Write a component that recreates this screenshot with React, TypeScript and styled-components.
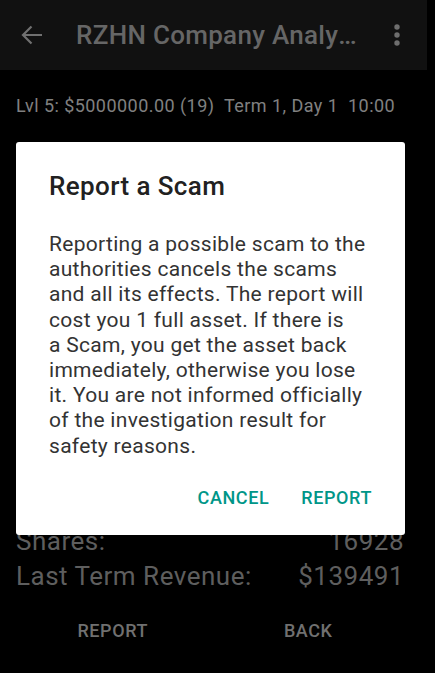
import React from 'react';
import styled, { createGlobalStyle } from 'styled-components';

const GlobalStyle = createGlobalStyle`
    html, body {
        margin: 0;
        padding: 0;
        background: #000;
    }
    body {
        font-family: Roboto, 'Noto Sans', sans-serif;
        -webkit-font-smoothing: antialiased;
    }
`;

const Screen = styled.div`
    position: relative;
    width: 435px;
    height: 673px;
    background: #000;
    overflow: hidden;
`;

const AppBar = styled.header`
    display: flex;
    align-items: center;
    width: 427px;
    height: 70px;
    background: #111111;
`;

const IconButton = styled.div<{ $shift?: number }>`
    display: flex;
    align-items: center;
    justify-content: center;
    width: 64px;
    height: 70px;
    flex-shrink: 0;
    padding-left: ${({ $shift }) => $shift ?? 0}px;
    box-sizing: border-box;
`;

const BarTitle = styled.h1`
    flex: 1;
    margin: 0 0 0 12px;
    min-width: 0;
    font-size: 26px;
    font-weight: 500;
    letter-spacing: 0.3px;
    color: #666666;
    white-space: nowrap;
    overflow: hidden;
    text-overflow: ellipsis;
`;

const StatusLine = styled.div`
    padding: 24px 16px 0;
    height: 24px;
    line-height: 24px;
    font-size: 18px;
    letter-spacing: 0.45px;
    color: #808080;
    white-space: pre;
`;

const Details = styled.div`
    display: flex;
    flex-direction: column;
    margin-top: 406px;
    padding: 0 31px 0 16px;
`;

const DetailRow = styled.div`
    display: flex;
    justify-content: space-between;
    height: 35px;
    line-height: 35px;
    font-size: 26px;
    letter-spacing: 0.5px;
    color: #5e5e5e;
`;

const Actions = styled.div`
    display: grid;
    grid-template-columns: 1fr 1fr;
    margin-top: 26px;
    padding: 0 29px 0 15px;
`;

const ActionButton = styled.div`
    text-align: center;
    font-size: 18px;
    font-weight: 500;
    letter-spacing: 0.6px;
    color: #707070;
`;

const Scrim = styled.div`
    position: absolute;
    inset: 0;
    display: flex;
    align-items: flex-start;
    padding: 142px 0 0 16px;
`;

const Dialog = styled.div`
    display: flex;
    flex-direction: column;
    box-sizing: border-box;
    width: 389px;
    height: 393px;
    padding: 28px 25px 20px 33px;
    background: #ffffff;
    border-radius: 3px;
`;

const DialogTitle = styled.h2`
    margin: 0;
    height: 32px;
    line-height: 32px;
    font-size: 26px;
    font-weight: 500;
    letter-spacing: 0.4px;
    color: #212121;
`;

const DialogBody = styled.p`
    margin: 30px 0 0;
    padding-right: 4px;
    font-size: 21px;
    line-height: 25.2px;
    letter-spacing: 0.3px;
    color: #333333;
`;

const DialogActions = styled.div`
    display: flex;
    justify-content: flex-end;
    gap: 16px;
    margin-top: auto;
`;

const TextButton = styled.button`
    height: 36px;
    padding: 0 8px;
    border: none;
    background: none;
    font-family: inherit;
    font-size: 18px;
    font-weight: 500;
    letter-spacing: 0.6px;
    color: #009688;
    text-transform: uppercase;
`;

const BackArrow = () => (
    <svg width="24" height="24" viewBox="0 0 24 24">
        <path d="M22 12H3M11.5 3.5L3 12l8.5 8.5" fill="none" stroke="#707070" strokeWidth="2.2" />
    </svg>
);

const MoreVert = () => (
    <svg width="10" height="30" viewBox="0 0 10 30">
        <circle cx="5" cy="7" r="2.7" fill="#6e6e6e" />
        <circle cx="5" cy="15" r="2.7" fill="#6e6e6e" />
        <circle cx="5" cy="23" r="2.7" fill="#6e6e6e" />
    </svg>
);

export default function App() {
    return (
        <>
            <GlobalStyle />
            <Screen>
                <AppBar>
                    <IconButton>
                        <BackArrow />
                    </IconButton>
                    <BarTitle>RZHN Company Analysis</BarTitle>
                    <IconButton $shift={4}>
                        <MoreVert />
                    </IconButton>
                </AppBar>
                <StatusLine>{'Lvl 5: $5000000.00 (19)  Term 1, Day 1  10:00'}</StatusLine>
                <Details>
                    <DetailRow>
                        <span>Shares:</span>
                        <span>16928</span>
                    </DetailRow>
                    <DetailRow>
                        <span>Last Term Revenue:</span>
                        <span>$139491</span>
                    </DetailRow>
                </Details>
                <Actions>
                    <ActionButton>REPORT</ActionButton>
                    <ActionButton>BACK</ActionButton>
                </Actions>
                <Scrim>
                    <Dialog>
                        <DialogTitle>Report a Scam</DialogTitle>
                        <DialogBody>
                            {'Reporting a possible scam to the authorities cancels the scams and all its ' +
                                'effects. The report will cost you 1 full asset. If there is a\u00a0Scam, you get ' +
                                'the asset back immediately, otherwise you lose it. You are not informed ' +
                                'officially of the investigation result for safety reasons.'}
                        </DialogBody>
                        <DialogActions>
                            <TextButton>Cancel</TextButton>
                            <TextButton>Report</TextButton>
                        </DialogActions>
                    </Dialog>
                </Scrim>
            </Screen>
        </>
    );
}
